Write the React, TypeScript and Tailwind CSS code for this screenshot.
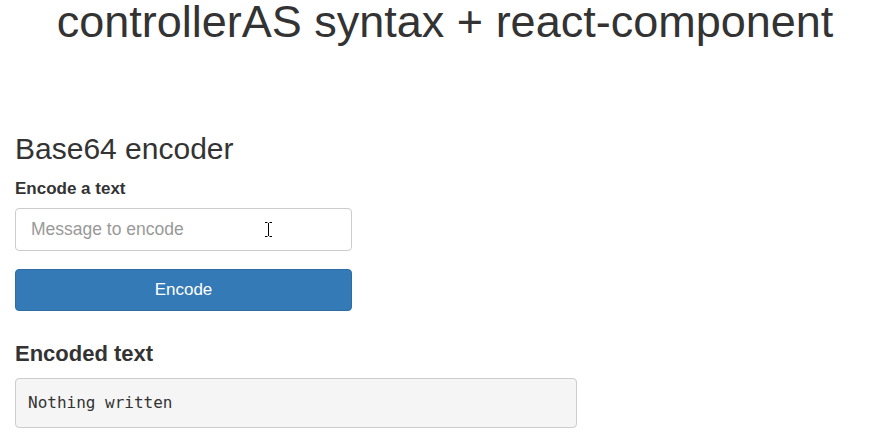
export default function App() {
  return (
    <div className="w-[890px] h-[436px] bg-white overflow-hidden text-[#333]" style={{ fontFamily: '"Liberation Sans", Arial, sans-serif' }}>
      <h1 className="text-center text-[45px] leading-[44px] text-[#333]">controllerAS syntax + react-component</h1>
      <div className="px-[15px] pt-[88px]">
        <h2 className="text-[30px] leading-[33px] text-[#333]">Base64 encoder</h2>
        <div className="mt-[14px] text-[17px] font-bold leading-[20px]">Encode a text</div>
        <div className="relative mt-[9px] w-[337px] h-[43px] border border-[#ccc] rounded-[4px] flex items-center pl-[15px]">
          <span className="text-[17.5px] text-[#999]">Message to encode</span>
          <svg className="absolute left-[248px] top-[12px]" width="9" height="17" viewBox="0 0 9 17">
            <path d="M1 1.5h2.5M5.5 1.5H8M4.5 2v13M1 15.5h2.5M5.5 15.5H8" stroke="#000" strokeWidth="1" fill="none" />
          </svg>
        </div>
        <button className="mt-[18px] w-[337px] h-[42px] bg-[#337ab7] border border-[#2e6da4] rounded-[4px] text-white text-[17px]">Encode</button>
        <div className="mt-[30px] text-[22px] font-bold leading-[26px]">Encoded text</div>
        <div className="mt-[11px] w-[562px] h-[50px] bg-[#f5f5f5] border border-[#ccc] rounded-[4px] flex items-center pl-[12px]">
          <span className="text-[16px] text-[#333]" style={{ fontFamily: '"DejaVu Sans Mono", monospace' }}>Nothing written</span>
        </div>
      </div>
    </div>
  );
}
